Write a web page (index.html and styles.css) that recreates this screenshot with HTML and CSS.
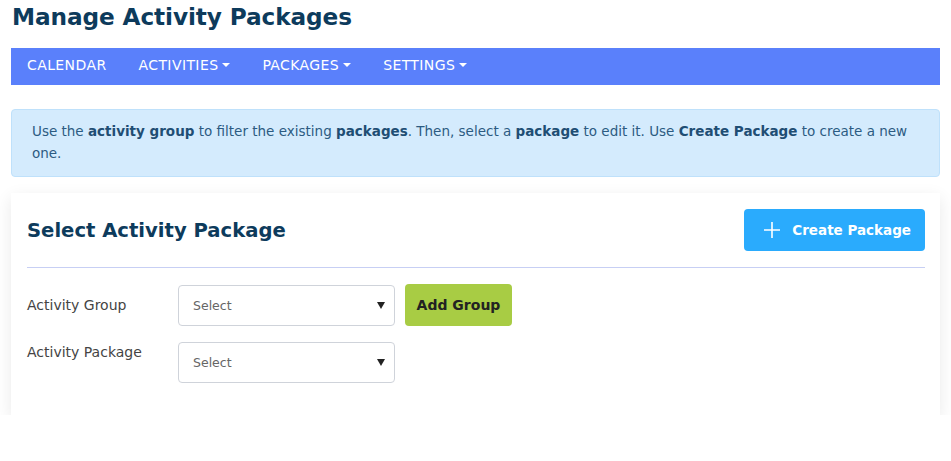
FILE: index.html
```html
<!DOCTYPE html>
<html lang="en">
<head>
  <meta charset="UTF-8">
  <meta name="viewport" content="width=device-width, initial-scale=1.0">
  <title>Manage Activity Packages</title>
  <link rel="stylesheet" href="styles.css">
</head>
<body>

<div class="page">
  <h1 class="page-title">Manage Activity Packages</h1>

  <nav class="topnav">
    <a href="#">CALENDAR</a>
    <a href="#" class="dropdown">ACTIVITIES</a>
    <a href="#" class="dropdown">PACKAGES</a>
    <a href="#" class="dropdown">SETTINGS</a>
  </nav>

  <div class="alert">
    Use the <b>activity group</b> to filter the existing <b>packages</b>. Then, select a <b>package</b> to edit it. Use <b>Create Package</b> to create a new one.
  </div>

  <div class="card">
    <div class="card-header">
      <h2>Select Activity Package</h2>
      <button class="btn-create">
        <svg width="18" height="18" viewBox="0 0 18 18"><path d="M9 1v16M1 9h16" stroke="#fff" stroke-width="1.6" fill="none"/></svg>
        Create Package
      </button>
    </div>

    <div class="form-row">
      <label for="group">Activity Group</label>
      <div class="select-wrap">
        <select id="group"><option>Select</option></select>
      </div>
      <button class="btn-add">Add Group</button>
    </div>

    <div class="form-row top">
      <label for="package">Activity Package</label>
      <div class="select-wrap">
        <select id="package"><option>Select</option></select>
      </div>
    </div>
  </div>
</div>

</body>
</html>
```

FILE: styles.css
```css
body { margin: 0; font-family: "DejaVu Sans", sans-serif; background-color: #fff; }
.page { padding: 0 11px; }
.page-title { margin: 0; padding: 3px 0 0 1px; height: 45px; font-size: 23.2px; color: #0d3b5c; font-weight: bold; letter-spacing: -0.1px; }

.topnav { display: flex; background-color: #5a80fb; height: 37px; align-items: center; padding: 0 0 3px 16px; box-sizing: border-box; }
.topnav a { color: #fff; text-decoration: none; font-size: 14px; letter-spacing: 0.4px; margin-right: 32px; display: flex; align-items: center; }
.dropdown::after { content: ""; margin-left: 4px; border-top: 4px solid #fff; border-left: 4px solid transparent; border-right: 4px solid transparent; }

.alert { margin-top: 24px; background-color: #d4ebfd; border: 1px solid #bfe1fb; border-radius: 4px; padding: 10px 20px 12px 20px; color: #2c5b82; font-size: 13.5px; line-height: 22px; }
.alert b { color: #1f4e74; }

.card { margin-top: 16px; background-color: #fff; box-shadow: 0 5px 16px rgba(0, 0, 0, 0.09); padding: 16px 15px 32px 16px; }
.card-header { display: flex; justify-content: space-between; align-items: center; border-bottom: 1px solid #c7cff4; padding-bottom: 16px; margin-bottom: 16px; }
.card-header h2 { margin: 0; font-size: 19.6px; color: #0d3b5c; }
.btn-create { display: flex; align-items: center; gap: 11px; background-color: #2aabfd; color: #fff; border: none; border-radius: 4px; height: 42px; padding: 0 14px 0 19px; font-family: inherit; font-size: 13.5px; font-weight: bold; cursor: pointer; }

.form-row { display: flex; align-items: center; margin-bottom: 16px; }
.form-row.top { align-items: flex-start; margin-bottom: 0; }
.form-row.top label { padding-top: 2px; }
.form-row label { width: 151px; font-size: 14px; color: #444; }
.select-wrap { position: relative; width: 217px; }
.select-wrap::after { content: ""; position: absolute; right: 10px; top: 17px; border-top: 7px solid #222; border-left: 4px solid transparent; border-right: 4px solid transparent; pointer-events: none; }
select { width: 100%; height: 41px; appearance: none; border: 1px solid #cfd3da; border-radius: 4px; background-color: #fff; padding: 0 14px; font-family: inherit; font-size: 12.5px; color: #666; }
.btn-add { margin-left: 10px; background-color: #a8cc44; border: none; border-radius: 4px; height: 42px; width: 107px; font-family: inherit; font-size: 14px; font-weight: bold; color: #222; cursor: pointer; }
```
